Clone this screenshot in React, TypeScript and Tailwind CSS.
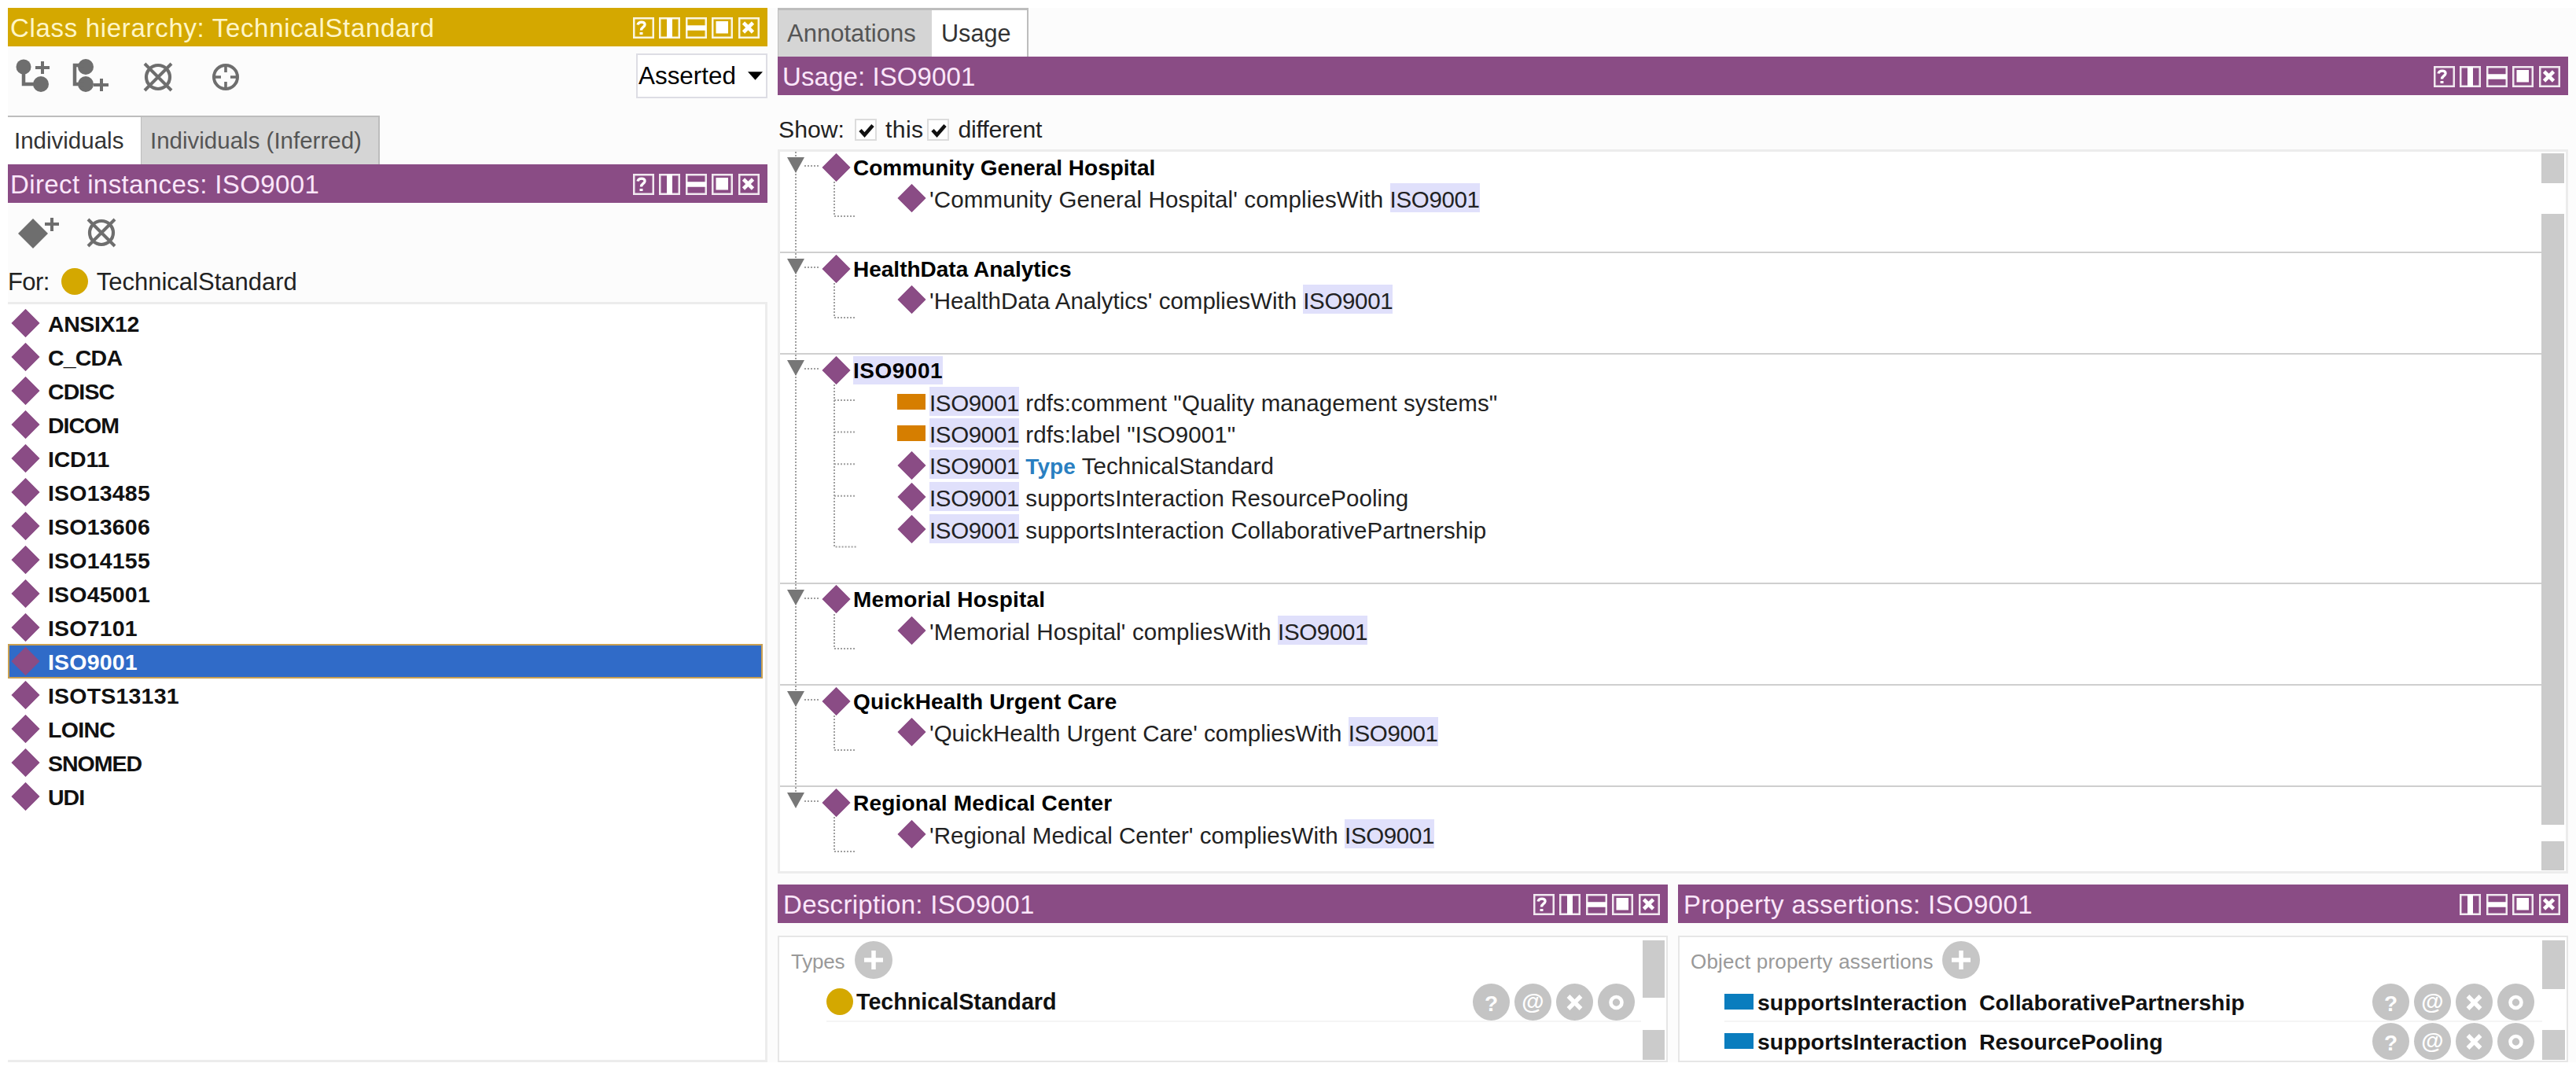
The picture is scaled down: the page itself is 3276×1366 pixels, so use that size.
import React from 'react';

const individuals = [
  { name: 'ANSIX12', tracking: 'tracking-[-0.4px]' },
  { name: 'C_CDA', tracking: 'tracking-[-0.8px]' },
  { name: 'CDISC', tracking: 'tracking-[-0.9px]' },
  { name: 'DICOM', tracking: 'tracking-[-1px]' },
  { name: 'ICD11', tracking: 'tracking-[-0.2px]' },
  { name: 'ISO13485', tracking: 'tracking-[0.2px]' },
  { name: 'ISO13606', tracking: 'tracking-[0.2px]' },
  { name: 'ISO14155', tracking: 'tracking-[0.2px]' },
  { name: 'ISO45001', tracking: 'tracking-[0.2px]' },
  { name: 'ISO7101', tracking: 'tracking-[0.2px]' },
  { name: 'ISO9001', tracking: 'tracking-[0.2px]' },
  { name: 'ISOTS13131', tracking: 'tracking-[0.2px]' },
  { name: 'LOINC', tracking: 'tracking-[-0.7px]' },
  { name: 'SNOMED', tracking: 'tracking-[-1px]' },
  { name: 'UDI', tracking: 'tracking-[-1px]' },
];

const SELECTED = 'ISO9001';

type Usage = { icon: 'individual' | 'annotation'; content: React.ReactNode };

const usageGroups: { name: string; tracking: string; usages: Usage[] }[] = [
  {
    name: 'Community General Hospital',
    tracking: 'tracking-[0.13px]',
    usages: [
      { icon: 'individual', content: <>'Community General Hospital' compliesWith <Mark /></> },
    ],
  },
  {
    name: 'HealthData Analytics',
    tracking: 'tracking-[0px]',
    usages: [
      { icon: 'individual', content: <>'HealthData Analytics' compliesWith <Mark /></> },
    ],
  },
  {
    name: 'ISO9001',
    tracking: 'tracking-[0.09px]',
    usages: [
      { icon: 'annotation', content: <><Mark /> rdfs:comment "Quality management systems"</> },
      { icon: 'annotation', content: <><Mark /> rdfs:label "ISO9001"</> },
      {
        icon: 'individual',
        content: (
          <>
            <Mark /> <b className="text-[28px] text-[#2a7fc1]">Type</b> TechnicalStandard
          </>
        ),
      },
      { icon: 'individual', content: <><Mark /> supportsInteraction ResourcePooling</> },
      { icon: 'individual', content: <><Mark /> supportsInteraction CollaborativePartnership</> },
    ],
  },
  {
    name: 'Memorial Hospital',
    tracking: 'tracking-[0.12px]',
    usages: [
      { icon: 'individual', content: <>'Memorial Hospital' compliesWith <Mark /></> },
    ],
  },
  {
    name: 'QuickHealth Urgent Care',
    tracking: 'tracking-[0px]',
    usages: [
      { icon: 'individual', content: <>'QuickHealth Urgent Care' compliesWith <Mark /></> },
    ],
  },
  {
    name: 'Regional Medical Center',
    tracking: 'tracking-[0.05px]',
    usages: [
      { icon: 'individual', content: <>'Regional Medical Center' compliesWith <Mark /></> },
    ],
  },
];

// Highlighted mention of the selected entity
function Mark() {
  return <span className="bg-[#e0e0fb] pt-[4px] tracking-[-0.35px]">ISO9001</span>;
}

function Diamond({ className = '' }: { className?: string }) {
  return (
    <svg viewBox="0 0 36 36" className={`h-[38px] w-[37px] shrink-0 ${className}`}>
      <path d="M18 1 L35 18 L18 35 L1 18 Z" fill="#8a4c85" stroke="#8a4c85" strokeLinejoin="round" />
    </svg>
  );
}

type ButtonKind = 'help' | 'columns' | 'rows' | 'square' | 'close';

function HeaderButton({ kind }: { kind: ButtonKind }) {
  return (
    <svg viewBox="0 0 27 27" className="size-[27px]" fill="none" stroke="#fff">
      <rect x="1.25" y="1.25" width="24.5" height="24.5" strokeWidth="2.5" opacity="0.88" />
      {kind === 'help' && (
        <>
          <path d="M6 9.5 C7 5 15.5 5 15 9.5 C14.5 13 10.5 12.5 10.5 16.5" strokeWidth="3.4" />
          <path d="M8.5 20.5 H12.5" strokeWidth="3" />
        </>
      )}
      {kind === 'columns' && <path d="M13.5 1 V26" strokeWidth="7" />}
      {kind === 'rows' && <path d="M1 13.5 H26" strokeWidth="6.5" />}
      {kind === 'square' && <rect x="5.5" y="5" width="15.5" height="15.5" fill="#fff" stroke="none" />}
      {kind === 'close' && <path d="M6.5 7 L18.5 19 M18.5 7 L6.5 19" strokeWidth="4.6" />}
    </svg>
  );
}

const allButtons: ButtonKind[] = ['help', 'columns', 'rows', 'square', 'close'];

interface PanelHeaderProps {
  title: string;
  className: string;
  buttons?: ButtonKind[];
}

function PanelHeader({ title, className, buttons = allButtons }: PanelHeaderProps) {
  return (
    <div className={`flex h-[49px] shrink-0 items-center justify-between pr-[10px] text-[33px] ${className}`}>
      <span className="pt-[2px] leading-none whitespace-nowrap">{title}</span>
      <div className="flex gap-[6.6px] pt-px">
        {buttons.map((kind) => (
          <HeaderButton key={kind} kind={kind} />
        ))}
      </div>
    </div>
  );
}

function DeleteIcon({ className = '' }: { className?: string }) {
  return (
    <svg viewBox="0 0 38 38" className={`size-[38px] ${className}`} fill="none" stroke="#6e6e6e">
      <circle cx="19" cy="19" r="15" strokeWidth="4.2" />
      <path d="M2 2 L36 36 M36 2 L2 36" strokeWidth="4" />
    </svg>
  );
}

function Checkbox() {
  return (
    <svg viewBox="0 0 28 28" className="size-[28px]" fill="none">
      <rect x="1" y="1" width="26" height="26" fill="#fff" stroke="#dcdcdc" strokeWidth="2" />
      <path d="M7 14.5 L12.5 20.5 L23 8.5" stroke="#111" strokeWidth="4.6" />
    </svg>
  );
}

function AddButton() {
  return (
    <svg viewBox="0 0 48 48" className="size-[48px]">
      <circle cx="24" cy="24" r="24" fill="#c6c6c6" />
      <path d="M24 12 V36 M12 24 H36" stroke="#fff" strokeWidth="5.5" />
    </svg>
  );
}

function RowActions() {
  return (
    <div className="flex gap-[6px] pt-px">
      <span className="flex size-[47px] items-center justify-center rounded-full bg-[#c4c4c4] pt-[4px] text-[28px] font-bold text-white">
        ?
      </span>
      <span className="flex size-[47px] items-center justify-center rounded-full bg-[#c4c4c4] text-[29px] font-bold text-white">
        @
      </span>
      <svg viewBox="0 0 47 47" className="size-[47px]">
        <circle cx="23.5" cy="23.5" r="23.5" fill="#c4c4c4" />
        <path d="M15.5 16 L31.5 32 M31.5 16 L15.5 32" stroke="#fff" strokeWidth="5.5" />
      </svg>
      <svg viewBox="0 0 47 47" className="size-[47px]">
        <circle cx="23.5" cy="23.5" r="23.5" fill="#c4c4c4" />
        <circle cx="23.5" cy="24" r="7" fill="none" stroke="#fff" strokeWidth="4.6" />
      </svg>
    </div>
  );
}

// Dotted connectors and the expand arrow of one tree group
function TreeLines({ count, last }: { count: number; last: boolean }) {
  const end = 82 + (count - 1) * 40.6;
  const rows = Array.from({ length: count - 1 }, (_, i) => 58 + i * 40.6);
  return (
    <svg className="absolute top-0 left-0 h-full w-[110px]" fill="none" stroke="#a0a0a0" strokeWidth="2" strokeDasharray="2 2">
      <path d={last ? 'M20 0 V14' : 'M20 0 V400'} />
      <path d="M31 18 H50" />
      <path d={`M69 38 V${end} H97`} />
      {rows.map((y) => (
        <path key={y} d={`M69 ${y} H97`} />
      ))}
      <path d="M9 7 H31 L20 27 Z" fill="#777" stroke="none" />
    </svg>
  );
}

function UsageTree() {
  return (
    <div className="min-w-0 flex-1">
      {usageGroups.map((group, index) => {
        const last = index === usageGroups.length - 1;
        return (
          <div
            key={group.name}
            className={`relative pb-[47.6px] ${index > 0 ? 'border-t-2 border-[#cfcfcf]' : ''}`}
          >
            <TreeLines count={group.usages.length} last={last} />
            <div className="relative flex h-[39px] items-center pl-[53px]">
              <Diamond />
              <b
                className={`ml-[3px] pt-[2px] text-[28px] leading-[34px] whitespace-nowrap ${
                  group.name === SELECTED ? 'bg-[#e0e0fb] tracking-[0.5px]' : ''
                } ${index > 2 ? 'tracking-[0.18px]' : ''}`}
              >
                {group.name}
              </b>
            </div>
            {group.usages.map((usage, i) => (
              <div key={i} className="relative flex h-[40.6px] items-center pl-[149px]">
                {usage.icon === 'individual' ? (
                  <Diamond />
                ) : (
                  <span className="mr-px h-[20px] w-[36px] bg-[#d67e00]" />
                )}
                <span
                  className={`ml-[4px] pt-[3px] text-[29.5px] leading-[37px] whitespace-nowrap text-[#222] ${group.tracking}`}
                >
                  {usage.content}
                </span>
              </div>
            ))}
          </div>
        );
      })}
    </div>
  );
}

function ClassHierarchy() {
  return (
    <>
      <PanelHeader
        title="Class hierarchy: TechnicalStandard"
        className="bg-[#d4a800] pl-[3px] tracking-[0.68px] text-[#fff6c8]"
      />
      <div className="flex h-[88px] shrink-0 items-start">
        <div className="flex pt-[15px] pl-[9px]">
          <svg viewBox="0 0 46 46" className="size-[46px]" fill="#6e6e6e" stroke="#6e6e6e">
            <circle cx="11" cy="11" r="9.5" stroke="none" />
            <circle cx="33" cy="33" r="10" stroke="none" />
            <path d="M11 15 V33 H30" fill="none" strokeWidth="4.5" />
            <path d="M35 4 V20 M26 12 H44" strokeWidth="4" />
          </svg>
          <svg viewBox="0 0 48 46" className="ml-[26px] h-[46px] w-[48px]" fill="#6e6e6e" stroke="#6e6e6e">
            <circle cx="18" cy="11" r="10" stroke="none" />
            <circle cx="18" cy="33" r="10" stroke="none" />
            <path d="M16 9 H4 V33 H16" fill="none" strokeWidth="4.5" />
            <path d="M38 26 V42 M28 34 H47" strokeWidth="4" />
          </svg>
          <DeleteIcon className="mt-[5px] ml-[43px]" />
          <svg viewBox="0 0 36 36" className="mt-[6px] ml-[49px] size-[36px]" fill="none" stroke="#6e6e6e">
            <circle cx="18" cy="18" r="15" strokeWidth="4" />
            <path d="M18 3 V12 M18 24 V33 M3 18 H12 M24 18 H33" strokeWidth="3.6" />
          </svg>
        </div>
        <div className="mt-[9px] ml-auto flex h-[57px] w-[167px] items-center border-2 border-[#dddde4] bg-white pl-px">
          <span className="text-[31.4px] leading-none">Asserted</span>
          <svg viewBox="0 0 20 11" className="ml-[15px] h-[11px] w-[19px]">
            <path d="M0 0 H20 L10 11 Z" />
          </svg>
        </div>
      </div>
    </>
  );
}

function Individuals() {
  return (
    <>
      <div className="flex h-[62px] shrink-0 text-[29.5px] leading-none">
        <div className="flex w-[169px] items-center border-t-2 border-[#bdbdbd] bg-white pl-[8px] text-[#333]">
          Individuals
        </div>
        <div className="flex w-[304px] items-center border-t-2 border-r-2 border-l border-[#bdbdbd] bg-[#d5d5d5] pl-[11px] text-[#555]">
          Individuals (Inferred)
        </div>
      </div>
      <PanelHeader
        title="Direct instances: ISO9001"
        className="bg-[#8a4c85] pl-[3px] tracking-[0.4px] text-[#fbe6fa]"
      />
      <div className="flex h-[74px] shrink-0 pt-[19px] pl-[12px]">
        <svg viewBox="0 0 54 40" className="h-[40px] w-[54px]">
          <path d="M20 1 L39 20 L20 39 L1 20 Z" fill="#6e6e6e" />
          <path d="M44 0 V17 M35 8 H53" stroke="#6e6e6e" strokeWidth="4" />
        </svg>
        <DeleteIcon className="ml-[34px]" />
      </div>
      <div className="flex h-[52px] shrink-0 items-center text-[31px] leading-none text-[#222]">
        <span className="tracking-[-0.6px]">For:</span>
        <span className="ml-[15px] size-[34px] rounded-full bg-[#d4a800]" />
        <span className="ml-[11px]">TechnicalStandard</span>
      </div>
      <div className="flex-1 border-t-3 border-r-3 border-b-3 border-[#ececec] bg-white pt-[2px] pr-[3px]">
        {individuals.map(({ name, tracking }) => (
          <div
            key={name}
            className={`flex h-[43.06px] items-center border-2 text-[28.5px] leading-none font-bold ${tracking} ${
              name === SELECTED ? 'border-[#c9a052] bg-[#306bc8] text-white' : 'border-transparent text-[#111]'
            }`}
          >
            <Diamond className="ml-[2px]" />
            <span className="ml-[10px] pt-[3px]">{name}</span>
          </div>
        ))}
      </div>
    </>
  );
}

function UsagePanel() {
  return (
    <>
      <div className="flex h-[62px] shrink-0 leading-none">
        <div className="flex w-[196px] items-center border-t-3 border-l border-[#bdbdbd] bg-[#d5d5d5] pl-[11px] text-[31px] text-[#555]">
          Annotations
        </div>
        <div className="flex w-[123px] items-center border-t-3 border-r-2 border-[#bdbdbd] bg-white pl-[12px] text-[30.6px] text-[#333]">
          Usage
        </div>
      </div>
      <PanelHeader title="Usage: ISO9001" className="bg-[#8a4c85] pl-[6px] tracking-[0.1px] text-[#fbe6fa]" />
      <div className="flex h-[69px] shrink-0 items-center pt-[18px] pl-px text-[30.2px] leading-none text-[#222]">
        <span className="pt-[2px]">Show:</span>
        <span className="ml-[13px]">
          <Checkbox />
        </span>
        <span className="ml-[11px] pt-[2px] tracking-[0.4px]">this</span>
        <span className="ml-[5px]">
          <Checkbox />
        </span>
        <span className="ml-[11px] pt-[2px] tracking-[-0.2px]">different</span>
      </div>
      <div className="flex h-[921px] shrink-0 border-3 border-[#ececec] bg-white">
        <UsageTree />
        <div className="flex w-[31px] flex-col pt-[2px] pr-[2px]">
          <div className="h-[38px] bg-[#cbcbcb]" />
          <div className="mt-[39px] h-[777px] bg-[#cbcbcb]" />
          <div className="mt-[21px] h-[37px] bg-[#cbcbcb]" />
        </div>
      </div>
    </>
  );
}

function DescriptionPanel() {
  return (
    <div className="flex w-[1132px] flex-col">
      <PanelHeader
        title="Description: ISO9001"
        className="bg-[#8a4c85] pl-[7px] tracking-[0.3px] text-[#fbe6fa]"
      />
      <div className="mt-[16px] flex h-[161px] border-2 border-[#e6e6e6] bg-white">
        <div className="min-w-0 flex-1">
          <div className="flex h-[58px] items-center pl-[15px] text-[26px] text-[#999]">
            <span className="pt-[4px] tracking-[-0.2px]">Types</span>
            <span className="ml-[13px]">
              <AddButton />
            </span>
          </div>
          <div className="ml-[60px] flex h-[50px] items-center border-b-2 border-[#f5f5f5] pr-[8px] text-[28.7px] font-bold text-[#111]">
            <span className="size-[34px] rounded-full bg-[#d4a800]" />
            <span className="ml-[4px] pt-[2px]">TechnicalStandard</span>
            <span className="ml-auto">
              <RowActions />
            </span>
          </div>
        </div>
        <div className="flex w-[32px] flex-col pt-[4px] pr-[2px] pl-[2px]">
          <div className="h-[73px] bg-[#cbcbcb]" />
          <div className="mt-[41px] h-[38px] bg-[#cbcbcb]" />
        </div>
      </div>
    </div>
  );
}

function PropertyAssertionsPanel() {
  const targets = ['CollaborativePartnership', 'ResourcePooling'];
  return (
    <div className="flex flex-1 flex-col">
      <PanelHeader
        title="Property assertions: ISO9001"
        className="bg-[#8a4c85] pl-[7px] tracking-[0.4px] text-[#fbe6fa]"
        buttons={['columns', 'rows', 'square', 'close']}
      />
      <div className="mt-[16px] flex h-[161px] border-2 border-[#e6e6e6] bg-white">
        <div className="min-w-0 flex-1">
          <div className="flex h-[58px] items-center pl-[14px] text-[26px] text-[#999]">
            <span className="pt-[4px] tracking-[0.2px]">Object property assertions</span>
            <span className="ml-[11px]">
              <AddButton />
            </span>
          </div>
          {targets.map((target) => (
            <div
              key={target}
              className="ml-[57px] flex h-[50px] items-center border-b-2 border-[#f5f5f5] pr-[10px] text-[28.4px] font-bold text-[#111] last:border-transparent"
            >
              <span className="h-[20px] w-[37px] bg-[#0a7dbe]" />
              <span className="ml-[5px] w-[282px] pt-[2px]">supportsInteraction</span>
              <span className="pt-[2px]">{target}</span>
              <span className="ml-auto">
                <RowActions />
              </span>
            </div>
          ))}
        </div>
        <div className="flex w-[31px] flex-col pt-[4px] pr-[2px]">
          <div className="h-[62px] bg-[#cbcbcb]" />
          <div className="mt-[52px] h-[38px] bg-[#cbcbcb]" />
        </div>
      </div>
    </div>
  );
}

export default function App() {
  return (
    <div className="h-[1366px] w-[3276px] bg-white pt-[10px] pl-[10px] font-['Liberation_Sans',Arial,sans-serif] text-black">
      <div className="flex h-[1341px] gap-[13px] bg-[#fcfcfc] pr-[10px]">
        <div className="flex w-[966px] shrink-0 flex-col">
          <ClassHierarchy />
          <Individuals />
        </div>
        <div className="flex min-w-0 flex-1 flex-col">
          <UsagePanel />
          <div className="mt-[14px] flex flex-1 gap-[13px]">
            <DescriptionPanel />
            <PropertyAssertionsPanel />
          </div>
        </div>
      </div>
    </div>
  );
}
